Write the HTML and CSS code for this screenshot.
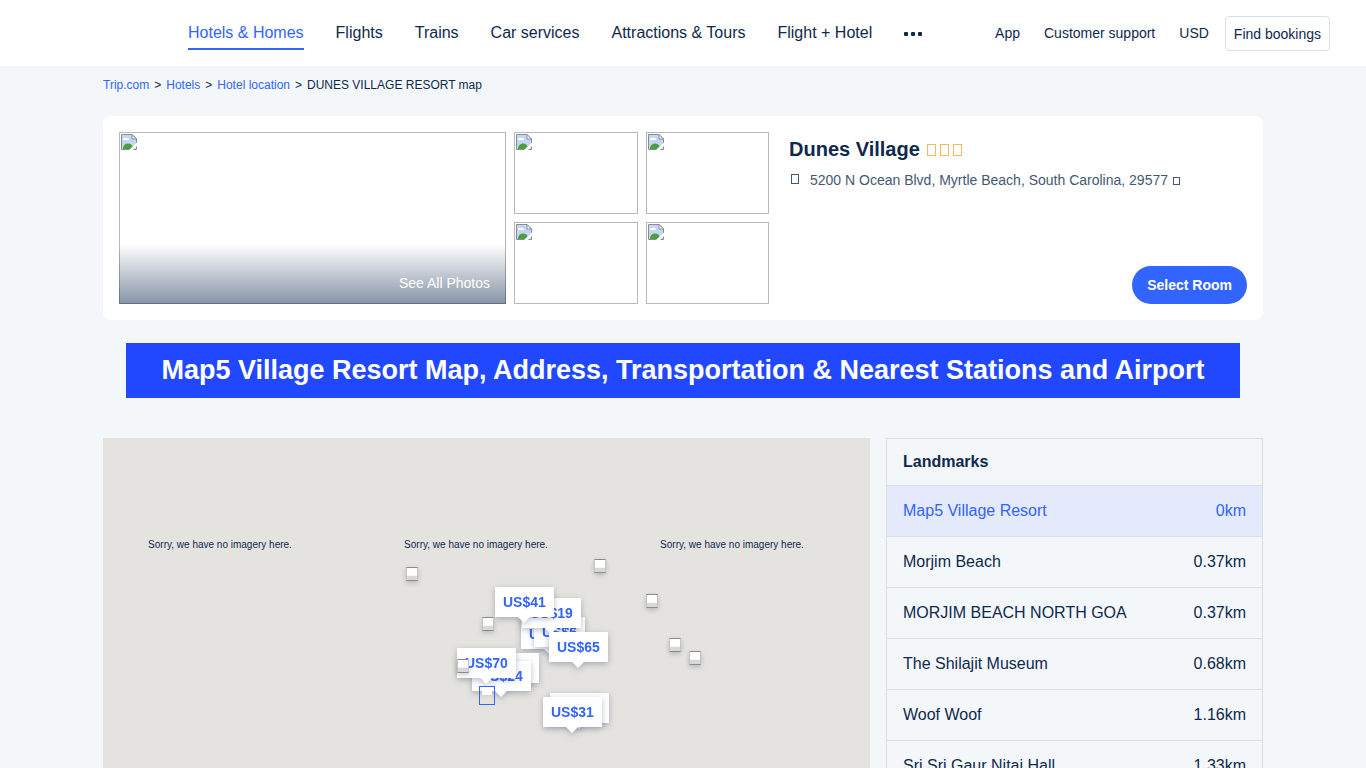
FILE: index.html
```
<!DOCTYPE html>
<html lang="en">

<head>
    <meta charset="UTF-8">
    <meta name="viewport" content="width=device-width, initial-scale=1.0">
    <title>Dunes Village Resort map</title>
    <link rel="stylesheet" href="styles.css">
</head>

<body>
    <!-- Placeholder icon shared by the photos -->
    <svg class="sprite" aria-hidden="true">
        <symbol id="broken" viewBox="0 0 16 16">
            <path d="M0.5 0.5H11L15.5 5V15.5H0.5Z" fill="#c3d6f5" stroke="#8c8c8c" />
            <path d="M2 6a2 2 0 0 1 3-2a2 2 0 0 1 3 2z" fill="#fff" />
            <path d="M2 15a5 5 0 0 1 10-1V15z" fill="#4ba03c" />
            <path d="M11 0.5V5H15.5z" fill="#fff" stroke="#8c8c8c" />
            <path d="M16 8.5L8 16H12L16 12z" fill="#fff" />
        </symbol>
    </svg>

    <header>
        <nav>
            <ul>
                <li><a class="active" href="#hotels">Hotels &amp; Homes</a></li>
                <li><a href="#flights">Flights</a></li>
                <li><a href="#trains">Trains</a></li>
                <li><a href="#cars">Car services</a></li>
                <li><a href="#attractions">Attractions &amp; Tours</a></li>
                <li><a href="#packages">Flight + Hotel</a></li>
                <li>
                    <button class="more" aria-label="More">
                        <svg width="18" height="4" viewBox="0 0 18 4">
                            <rect width="4" height="4" rx="1" />
                            <rect x="7" width="4" height="4" rx="1" />
                            <rect x="14" width="4" height="4" rx="1" />
                        </svg>
                    </button>
                </li>
            </ul>
        </nav>
        <div class="header-options">
            <a href="#app">App</a>
            <a href="#support">Customer support</a>
            <a href="#currency">USD</a>
            <button class="bookings">Find bookings</button>
        </div>
    </header>

    <main>
        <div class="breadcrumb">
            <a href="#home">Trip.com</a><span>&gt;</span><a href="#hotels">Hotels</a><span>&gt;</span><a href="#location">Hotel location</a><span>&gt;</span>DUNES VILLAGE RESORT map
        </div>

        <section class="hotel">
            <div class="photos">
                <a class="photo photo-main" href="#photos">
                    <svg class="broken"><use href="#broken" /></svg>
                    <span class="see-all">See All Photos</span>
                </a>
                <div class="photo"><svg class="broken"><use href="#broken" /></svg></div>
                <div class="photo"><svg class="broken"><use href="#broken" /></svg></div>
                <div class="photo"><svg class="broken"><use href="#broken" /></svg></div>
                <div class="photo"><svg class="broken"><use href="#broken" /></svg></div>
            </div>
            <div class="info">
                <div class="title">
                    <h2>Dunes Village</h2>
                    <div class="stars"><i></i><i></i><i></i></div>
                </div>
                <p class="address"><i></i><span>5200 N Ocean Blvd, Myrtle Beach, South Carolina, 29577</span><i class="arrow"></i></p>
                <button class="select-room">Select Room</button>
            </div>
        </section>

        <h1>Map5 Village Resort Map, Address, Transportation &amp; Nearest Stations and Airport</h1>

        <section class="location">
            <div class="map">
                <p class="tile tile-1">Sorry, we have no imagery here.</p>
                <p class="tile tile-2">Sorry, we have no imagery here.</p>
                <p class="tile tile-3">Sorry, we have no imagery here.</p>

                <!-- Hotel prices -->
                <div class="price p1">US$56</div>
                <div class="price p2">US$6</div>
                <div class="price p3">US$19</div>
                <div class="price p4">US$41</div>
                <div class="price p5">US$65</div>
                <div class="price p6">US$30</div>
                <div class="price p7">US$24</div>
                <div class="price p8">US$70</div>
                <div class="price p9">US$31</div>
                <div class="price p10">US$31</div>

                <!-- Landmarks -->
                <div class="pin m1"></div>
                <div class="pin m2"></div>
                <div class="pin m3"></div>
                <div class="pin m4"></div>
                <div class="pin m5"></div>
                <div class="pin m6"></div>
                <div class="pin m7"></div>
                <div class="pin current"></div>
            </div>
            <aside class="landmarks">
                <h3>Landmarks</h3>
                <ul>
                    <li class="selected"><span>Map5 Village Resort</span><span>0km</span></li>
                    <li><span>Morjim Beach</span><span>0.37km</span></li>
                    <li><span>MORJIM BEACH NORTH GOA</span><span>0.37km</span></li>
                    <li><span>The Shilajit Museum</span><span>0.68km</span></li>
                    <li><span>Woof Woof</span><span>1.16km</span></li>
                    <li><span>Sri Sri Gaur Nitai Hall</span><span>1.33km</span></li>
                </ul>
            </aside>
        </section>
    </main>
</body>

</html>
```
FILE: styles.css
```
* {
    box-sizing: border-box;
    margin: 0;
    padding: 0;
}

body {
    font-family: "Liberation Sans", Arial, sans-serif;
    font-size: 14px;
    line-height: 18px;
    background-color: #f4f7fa;
    color: #0f294d;
}

a {
    color: inherit;
    text-decoration: none;
}

button {
    font: inherit;
    color: inherit;
    cursor: pointer;
}

ul {
    list-style: none;
}

.sprite {
    position: absolute;
    width: 0;
    height: 0;
}

/* Header */
header {
    display: flex;
    justify-content: space-between;
    align-items: center;
    height: 66px;
    padding: 0 36px 0 188px;
    background-color: #fff;
}

nav ul {
    display: flex;
    align-items: center;
    gap: 32px;
    font-size: 16px;
}

nav a {
    display: block;
    padding: 8px 0 6px;
    border-bottom: 2px solid transparent;
}

nav a.active {
    color: #3264ff;
    border-color: #3264ff;
}

.more {
    display: block;
    padding-top: 2px;
    border: none;
    background: none;
    fill: #0f294d;
}

.more svg {
    display: block;
}

.header-options {
    display: flex;
    align-items: center;
    gap: 24px;
}

.bookings {
    height: 35px;
    margin-left: -8px;
    padding: 2px 8px 0;
    border: 1px solid #dadfe6;
    border-radius: 4px;
    background-color: #fff;
}

main {
    max-width: 1160px;
    margin: 0 auto;
}

.breadcrumb {
    padding: 10px 0 22px;
    font-size: 12px;
}

.breadcrumb a {
    color: #3264ff;
}

.breadcrumb span {
    margin: 0 5px;
}

/* Hotel card */
.hotel {
    display: flex;
    gap: 20px;
    padding: 16px;
    border-radius: 8px;
    background-color: #fff;
}

.photos {
    display: grid;
    grid-template-columns: 387fr 124fr 123fr;
    grid-template-rows: 82px 82px;
    gap: 8px;
    flex: 650;
}

.photo {
    border: 1px solid #b9b9b9;
    padding: 1px;
}

.photo-main {
    position: relative;
    grid-row: span 2;
}

.broken {
    display: block;
    width: 16px;
    height: 16px;
}

.see-all {
    position: absolute;
    left: -1px;
    right: -1px;
    bottom: -1px;
    height: 60px;
    padding: 30px 16px 0;
    text-align: right;
    color: #fff;
    background: linear-gradient(rgba(15, 41, 77, 0), rgba(15, 41, 77, 0.5));
}

.info {
    display: flex;
    flex-direction: column;
    flex: 458;
}

.title {
    display: flex;
    align-items: center;
    gap: 7px;
    padding: 4px 0;
}

.title h2 {
    font-size: 20px;
    line-height: 26px;
}

.stars {
    display: flex;
    gap: 4px;
    padding-top: 2px;
}

.stars i {
    width: 9px;
    height: 12px;
    border: 1px solid #f5b95f;
}

.address {
    display: flex;
    align-items: center;
    padding: 5px 2px;
    color: #455873;
}

.address i {
    width: 8px;
    height: 10px;
    margin: 0 11px 2px 0;
    border: 1px solid #455873;
}

.address .arrow {
    width: 7px;
    height: 8px;
    margin: 2px 0 0 5px;
}

.select-room {
    align-self: flex-end;
    height: 38px;
    margin-top: auto;
    padding: 0 15px;
    border: none;
    border-radius: 20px;
    background-color: #3264ff;
    color: #fff;
    font-weight: bold;
}

h1 {
    margin: 23px 23px 40px;
    padding: 11px 0;
    background-color: #2147ff;
    color: #fff;
    font-size: 27px;
    line-height: 33px;
    text-align: center;
}

/* Map and landmarks */
.location {
    display: grid;
    grid-template-columns: 767fr 377fr;
    gap: 16px;
}

.map {
    position: relative;
    min-height: 480px;
    overflow: hidden;
    background-color: #e5e3df;
}

.tile {
    position: absolute;
    top: 98px;
    width: 256px;
    font-size: 10px;
    text-align: center;
}

.tile-1 { left: -11px; }
.tile-2 { left: 245px; }
.tile-3 { left: 501px; }

.price {
    position: absolute;
    padding: 0 8px;
    background-color: #fff;
    color: #3264ff;
    font-weight: bold;
    line-height: 30px;
    filter: drop-shadow(0 2px 3px rgba(15, 41, 77, 0.3));
}

.price::after {
    content: "";
    position: absolute;
    top: 30px;
    left: calc(50% - 6px);
    border: 6px solid transparent;
    border-top-color: #fff;
    border-bottom: none;
}

.p1 { left: 418px; top: 181px; }
.p2 { left: 431px; top: 179px; }
.p3 { left: 419px; top: 160px; }
.p4 { left: 392px; top: 149px; }
.p5 { left: 446px; top: 194px; }
.p6 { left: 377px; top: 215px; }
.p7 { left: 369px; top: 223px; }
.p8 { left: 354px; top: 210px; }
.p9 { left: 447px; top: 255px; }
.p10 { left: 440px; top: 259px; }

.pin {
    position: absolute;
    width: 12px;
    height: 14px;
    border: 1px solid #8c8c8c;
    border-left-color: #c4c4c4;
    border-right-color: #c4c4c4;
    background: linear-gradient(#fff 60%, #d8d8d8 70%);
    box-shadow: 0 2px 5px rgba(0, 0, 0, 0.2);
}

.m1 { left: 303px; top: 129px; }
.m2 { left: 491px; top: 121px; }
.m3 { left: 379px; top: 179px; }
.m4 { left: 543px; top: 156px; }
.m5 { left: 566px; top: 200px; }
.m6 { left: 586px; top: 213px; }
.m7 { left: 354px; top: 221px; }

.current {
    left: 376px;
    top: 248px;
    width: 16px;
    height: 19px;
    border-color: #3264ff;
    background: linear-gradient(#fff, #fff) 2px 0 / 10px 8px no-repeat;
    box-shadow: none;
}

.landmarks {
    align-self: start;
    border: 1px solid #dadfe6;
}

.landmarks h3 {
    padding: 14px 16px;
    font-size: 16px;
}

.landmarks li {
    display: flex;
    justify-content: space-between;
    padding: 16px;
    border-top: 1px solid #dadfe6;
    font-size: 16px;
}

.landmarks .selected {
    background-color: #e4eafb;
    color: #3264ff;
}
```
